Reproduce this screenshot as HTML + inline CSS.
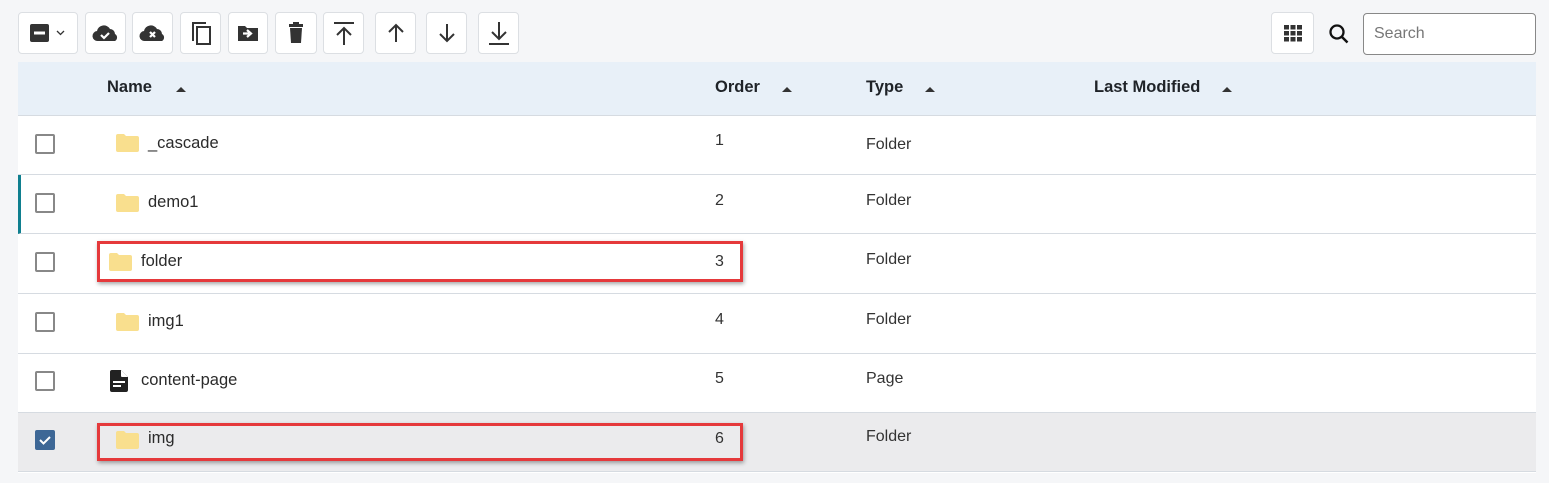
<!DOCTYPE html>
<html><head><meta charset="utf-8"><style>
*{box-sizing:border-box;margin:0;padding:0}
body{width:1549px;height:483px;background:#f5f6f8;font-family:"Liberation Sans",sans-serif;position:relative;overflow:hidden;color:#222}
.b{position:absolute;top:12px;height:42px;background:#fff;border:1px solid #dcdfe3;border-radius:4px;display:flex;align-items:center;justify-content:center}
.b svg{display:block}
.tbl{position:absolute;left:18px;top:62px;width:1518px;height:411px;background:#fff}
.hd{position:absolute;left:0;top:0;width:1518px;height:54px;background:#e8f0f8;border-bottom:1px solid #d6dbe1}
.hd span{position:absolute;top:16px;font-weight:bold;font-size:16.5px;color:#1f2328}
.hd i{position:absolute;top:25px;width:0;height:0;border-left:5px solid transparent;border-right:5px solid transparent;border-bottom:5px solid #333}
.r{position:absolute;left:0;width:1518px;border-bottom:1px solid #d6dbe1}
.cb{position:absolute;left:17px;width:20px;height:20px;border:2px solid #888;border-radius:2px;background:#fff}
.nm{position:absolute;font-size:16.5px;color:#2b2b2b}
.fo{position:absolute;width:23px;height:18px}
.o{position:absolute;left:697px;font-size:16px;color:#333}
.t{position:absolute;left:848px;font-size:16px;color:#333}
.red{position:absolute;left:79px;width:646px;border:3px solid #e5393b;box-shadow:1px 2px 4px rgba(0,0,0,.35)}
</style></head><body>
<div class="b" style="left:18px;width:60px"><svg width="40" height="22"><rect x="2" y="2" width="19" height="18" rx="2" fill="#333"/><rect x="6" y="9.5" width="11" height="3" fill="#fff"/><path d="M29 9l3.5 3.5L36 9" stroke="#333" stroke-width="1.3" fill="none"/></svg></div>
<div class="b" style="left:85px;width:41px"><svg width="28" height="20"><path d="M6 18a5 5 0 0 1-1-10 7 7 0 0 1 13-2 5 5 0 0 1 5 5 4 4 0 0 1 0 7z" fill="#333"/><path d="M9 12l3 3 5-5" stroke="#fff" stroke-width="2.2" fill="none"/></svg></div>
<div class="b" style="left:132px;width:41px"><svg width="28" height="20"><path d="M6 18a5 5 0 0 1-1-10 7 7 0 0 1 13-2 5 5 0 0 1 5 5 4 4 0 0 1 0 7z" fill="#333"/><path d="M11 9l5 5M16 9l-5 5" stroke="#fff" stroke-width="2.2"/></svg></div>
<div class="b" style="left:180px;width:41px"><svg width="24" height="28"><path d="M4 22V4h13" stroke="#333" stroke-width="2" fill="none"/><rect x="8" y="8" width="13" height="17" stroke="#333" stroke-width="2" fill="none"/></svg></div>
<div class="b" style="left:228px;width:40px"><svg width="22" height="20"><path d="M1 3h7l2 2h11v13H1z" fill="#333"/><path d="M6 10.5h6M10 7l4 3.5-4 3.5" stroke="#fff" stroke-width="2.2" fill="none"/></svg></div>
<div class="b" style="left:275px;width:42px"><svg width="18" height="22"><rect x="2" y="2" width="14" height="3" fill="#333"/><rect x="6" y="0" width="6" height="3" fill="#333"/><path d="M3 6h12l-1 15H4z" fill="#333"/></svg></div>
<div class="b" style="left:323px;width:41px"><svg width="24" height="26"><path d="M2 3h20M12 8v17M5 15l7-7 7 7" stroke="#333" stroke-width="2" fill="none"/></svg></div>
<div class="b" style="left:375px;width:41px"><svg width="20" height="22"><path d="M10 3v17M3 10l7-7 7 7" stroke="#333" stroke-width="2" fill="none"/></svg></div>
<div class="b" style="left:426px;width:41px"><svg width="20" height="22"><path d="M10 2v17M3 12l7 7 7-7" stroke="#333" stroke-width="2" fill="none"/></svg></div>
<div class="b" style="left:478px;width:41px"><svg width="24" height="26"><path d="M12 2v17M5 12l7 7 7-7M2 24h20" stroke="#333" stroke-width="2" fill="none"/></svg></div>
<div class="b" style="left:1271px;width:43px"><svg width="20" height="18"><g fill="#333"><rect x="1" y="1" width="5" height="4.5"/><rect x="7.5" y="1" width="5" height="4.5"/><rect x="14" y="1" width="5" height="4.5"/><rect x="1" y="7" width="5" height="4.5"/><rect x="7.5" y="7" width="5" height="4.5"/><rect x="14" y="7" width="5" height="4.5"/><rect x="1" y="13" width="5" height="4.5"/><rect x="7.5" y="13" width="5" height="4.5"/><rect x="14" y="13" width="5" height="4.5"/></g></svg></div>
<svg style="position:absolute;left:1328px;top:23px" width="24" height="24"><circle cx="9" cy="9" r="6.5" stroke="#111" stroke-width="2.3" fill="none"/><path d="M13.5 13.5l6 6" stroke="#111" stroke-width="2.5"/></svg>
<div style="position:absolute;left:1363px;top:13px;width:173px;height:42px;background:#fff;border:1px solid #888;border-radius:4px;font-size:16px;color:#777;padding:11px 0 0 10px">Search</div>
<div class="tbl">
<div class="hd"><span style="left:89px">Name</span><i style="left:158px"></i><span style="left:697px">Order</span><i style="left:764px"></i><span style="left:848px">Type</span><i style="left:907px"></i><span style="left:1076px">Last Modified</span><i style="left:1204px"></i></div>
<div class="r" style="top:54px;height:59px"><div class="cb" style="top:18px"></div><svg class="fo" style="left:98px;top:18px"><path d="M0 2a2 2 0 0 1 2-2h6l2 2h11a2 2 0 0 1 2 2v12a2 2 0 0 1-2 2H2a2 2 0 0 1-2-2z" fill="#f9df8e"/></svg><div class="nm" style="left:130px;top:18px">_cascade</div><div class="o" style="top:16px">1</div><div class="t" style="top:20px">Folder</div></div>
<div class="r" style="top:113px;height:59px;border-left:3px solid #0f7f8f"><div class="cb" style="top:18px;left:14px"></div><svg class="fo" style="left:95px;top:19px"><path d="M0 2a2 2 0 0 1 2-2h6l2 2h11a2 2 0 0 1 2 2v12a2 2 0 0 1-2 2H2a2 2 0 0 1-2-2z" fill="#f9df8e"/></svg><div class="nm" style="left:127px;top:18px">demo1</div><div class="o" style="top:17px;left:694px">2</div><div class="t" style="top:17px;left:845px">Folder</div></div>
<div class="r" style="top:172px;height:60px"><div class="red" style="top:7px;height:41px"></div><div class="cb" style="top:18px"></div><svg class="fo" style="left:91px;top:19px"><path d="M0 2a2 2 0 0 1 2-2h6l2 2h11a2 2 0 0 1 2 2v12a2 2 0 0 1-2 2H2a2 2 0 0 1-2-2z" fill="#f9df8e"/></svg><div class="nm" style="left:123px;top:18px">folder</div><div class="o" style="top:19px">3</div><div class="t" style="top:17px">Folder</div></div>
<div class="r" style="top:232px;height:60px"><div class="cb" style="top:18px"></div><svg class="fo" style="left:98px;top:19px"><path d="M0 2a2 2 0 0 1 2-2h6l2 2h11a2 2 0 0 1 2 2v12a2 2 0 0 1-2 2H2a2 2 0 0 1-2-2z" fill="#f9df8e"/></svg><div class="nm" style="left:130px;top:18px">img1</div><div class="o" style="top:17px">4</div><div class="t" style="top:17px">Folder</div></div>
<div class="r" style="top:292px;height:59px"><div class="cb" style="top:17px"></div><svg style="position:absolute;left:92px;top:16px" width="18" height="22"><path d="M0 2a2 2 0 0 1 2-2h9l7 7v13a2 2 0 0 1-2 2H2a2 2 0 0 1-2-2z" fill="#222"/><path d="M11 0v6a1 1 0 0 0 1 1h6z" fill="#fff"/><rect x="3" y="11" width="12" height="2" fill="#fff"/><rect x="3" y="15" width="8" height="2" fill="#fff"/></svg><div class="nm" style="left:123px;top:17px">content-page</div><div class="o" style="top:16px">5</div><div class="t" style="top:16px">Page</div></div>
<div class="r" style="top:351px;height:59px;background:#ebebed"><div class="red" style="top:10px;height:38px"></div><div class="cb" style="top:17px;background:#3d6796;border-color:#3d6796"><svg width="16" height="16" style="position:absolute;left:0;top:0"><path d="M3 8l3.5 3.5L13 5" stroke="#fff" stroke-width="2" fill="none"/></svg></div><svg class="fo" style="left:98px;top:18px"><path d="M0 2a2 2 0 0 1 2-2h6l2 2h11a2 2 0 0 1 2 2v12a2 2 0 0 1-2 2H2a2 2 0 0 1-2-2z" fill="#f9df8e"/></svg><div class="nm" style="left:130px;top:16px">img</div><div class="o" style="top:17px">6</div><div class="t" style="top:15px">Folder</div></div>
</div>
</body></html>
